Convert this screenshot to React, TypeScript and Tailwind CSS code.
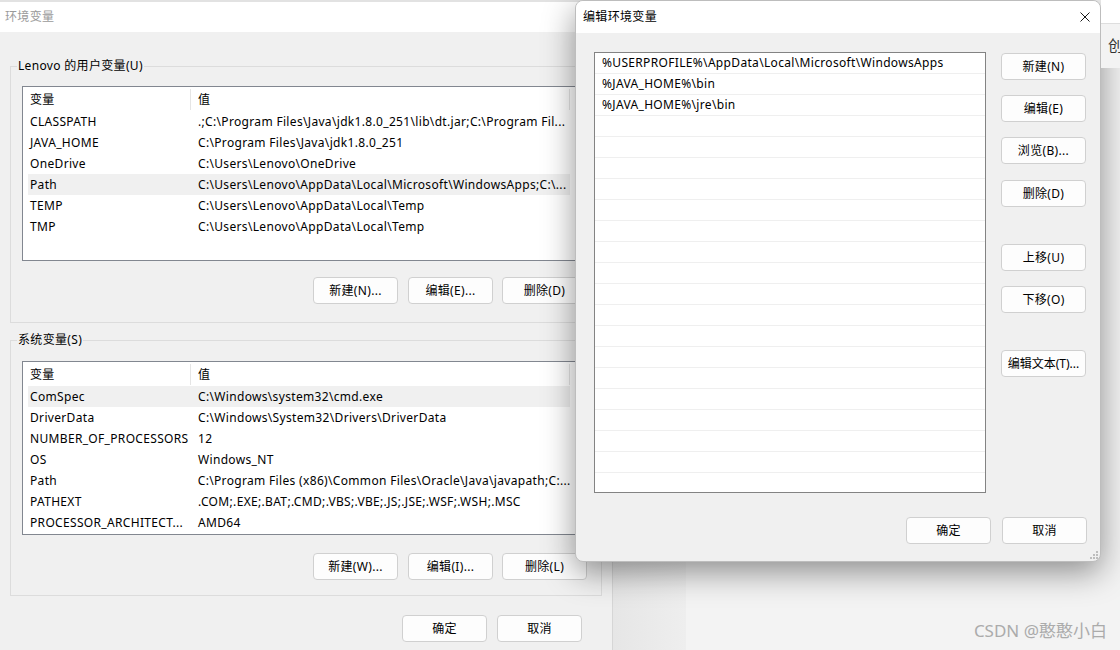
import React from 'react';

const userVars: [string, string][] = [
  ['CLASSPATH', ' .;C:\\Program Files\\Java\\jdk1.8.0_251\\lib\\dt.jar;C:\\Program Fil...'],
  ['JAVA_HOME', 'C:\\Program Files\\Java\\jdk1.8.0_251'],
  ['OneDrive', 'C:\\Users\\Lenovo\\OneDrive'],
  ['Path', 'C:\\Users\\Lenovo\\AppData\\Local\\Microsoft\\WindowsApps;C:\\...'],
  ['TEMP', 'C:\\Users\\Lenovo\\AppData\\Local\\Temp'],
  ['TMP', 'C:\\Users\\Lenovo\\AppData\\Local\\Temp'],
];

const systemVars: [string, string][] = [
  ['ComSpec', 'C:\\Windows\\system32\\cmd.exe'],
  ['DriverData', 'C:\\Windows\\System32\\Drivers\\DriverData'],
  ['NUMBER_OF_PROCESSORS', '12'],
  ['OS', 'Windows_NT'],
  ['Path', 'C:\\Program Files (x86)\\Common Files\\Oracle\\Java\\javapath;C:...'],
  ['PATHEXT', '.COM;.EXE;.BAT;.CMD;.VBS;.VBE;.JS;.JSE;.WSF;.WSH;.MSC'],
  ['PROCESSOR_ARCHITECT...', 'AMD64'],
];

const pathEntries = [
  '%USERPROFILE%\\AppData\\Local\\Microsoft\\WindowsApps',
  '%JAVA_HOME%\\bin',
  '%JAVA_HOME%\\jre\\bin',
];

const WinButton = ({ label, className = '' }: { label: string; className?: string }) => (
  <button
    type="button"
    className={`w-[85px] h-[27px] shrink-0 rounded-[4px] border border-[#d0d0d0] bg-[#fdfdfd] text-[12px] leading-[25px] text-black ${className}`}
  >
    {label}
  </button>
);

const VarList = ({ rows, selected, height }: { rows: [string, string][]; selected: number; height: string }) => (
  <div className={`w-[568px] ${height} border border-[#828790] bg-white overflow-hidden`}>
    <div className="flex h-[24px] items-center ml-[5px]">
      <div className="w-[163px] h-[21px] leading-[21px] pl-[2px] border-r border-[#e5e5e5]">变量</div>
      <div className="w-[379px] h-[21px] leading-[21px] pl-[7px] border-r border-[#e5e5e5]">值</div>
    </div>
    {rows.map(([name, value], i) => (
      <div
        key={name}
        className={`flex h-[21px] leading-[21px] ml-[5px] w-[542px] whitespace-nowrap ${i === selected ? 'bg-[#f0f0f0]' : ''}`}
      >
        <div className="w-[163px] pl-[2px] overflow-hidden">{name}</div>
        <div className="pl-[7px] overflow-hidden">{value}</div>
      </div>
    ))}
  </div>
);

const GroupLabel = ({ text }: { text: string }) => (
  <span className="absolute left-[6px] top-[-10px] px-[1px] leading-[18px] bg-[#f0f0f0]">{text}</span>
);

export default function App() {
  return (
    <div className="relative w-[1120px] h-[650px] overflow-hidden bg-[#f3f3f3] text-[12px] tracking-[0.33px] text-black font-['Noto_Sans','Noto_Sans_CJK_SC',sans-serif]">
      {/* panel behind, right of the old window */}
      <div className="absolute left-[613px] top-0 w-[73px] h-[650px] bg-gradient-to-r from-[#e6e6e6] to-[#eeeeee]" />

      {/* something peeking out at the top right */}
      <div className="absolute left-[1101px] top-0 w-[19px] h-[70px] z-10">
        <div className="h-[24px] bg-white border-b border-[#dedede]" />
        <div className="flex items-center h-[44px] bg-[#f3f3f3] pb-[2px]">
          <span className="w-[5px] h-[8px] rounded-r-full bg-[#a58be0]" />
          <span className="ml-[7px] text-[15px] text-[#333]">创</span>
        </div>
      </div>

      {/* 环境变量 window */}
      <div className="absolute left-0 top-0 w-[613px] h-[650px] bg-[#f0f0f0] border-r border-[#d6d6d6]">
        <div className="h-[2px] bg-[#e2e2e2]" />
        <div className="h-[30px] bg-white pl-[5px] flex items-center text-[#9a9a9a]">环境变量</div>

        <div className="relative ml-[10px] mt-[34px] w-[592px] h-[257px] border border-[#dcdcdc] pl-[11px] pt-[19px]">
          <GroupLabel text="Lenovo 的用户变量(U)" />
          <VarList rows={userVars} selected={3} height="h-[175px]" />
          <div className="flex justify-end gap-[10px] pr-[14px] mt-[16px]">
            <WinButton label="新建(N)..." />
            <WinButton label="编辑(E)..." />
            <WinButton label="删除(D)" className="-ml-[1px]" />
          </div>
        </div>

        <div className="relative ml-[10px] mt-[17px] w-[592px] h-[256px] border border-[#dcdcdc] pl-[11px] pt-[20px]">
          <GroupLabel text="系统变量(S)" />
          <VarList rows={systemVars} selected={0} height="h-[174px]" />
          <div className="flex justify-end gap-[10px] pr-[14px] mt-[18px]">
            <WinButton label="新建(W)..." />
            <WinButton label="编辑(I)..." />
            <WinButton label="删除(L)" className="-ml-[1px]" />
          </div>
        </div>

        <div className="flex justify-end gap-[10px] pr-[30px] mt-[19px]">
          <WinButton label="确定" />
          <WinButton label="取消" />
        </div>
      </div>

      {/* 编辑环境变量 dialog */}
      <div className="absolute left-[575px] top-0 w-[526px] h-[562px] rounded-[8px] border border-[#bdbdbd] bg-[#f0f0f0] overflow-hidden shadow-[0_10px_32px_rgba(0,0,0,0.42)]">
        <div className="h-[32px] bg-white flex items-center justify-between pl-[7px] pr-[10px]">
          <span>编辑环境变量</span>
          <svg width="10" height="10" viewBox="0 0 10 10">
            <path d="M0.5 0.5 L9.5 9.5 M9.5 0.5 L0.5 9.5" stroke="#1a1a1a" strokeWidth="1" />
          </svg>
        </div>

        <div className="flex pl-[18px] pt-[19px]">
          <div className="w-[392px] h-[441px] border border-[#838383] bg-white overflow-hidden">
            {Array.from({ length: 21 }).map((_, i) => (
              <div key={i} className="h-[21px] border-b border-[#efefef] pl-[7px] leading-[20px] whitespace-nowrap">
                {pathEntries[i] ?? ''}
              </div>
            ))}
          </div>
          <div className="flex flex-col ml-[15px] mt-[1px]">
            <WinButton label="新建(N)" />
            <WinButton label="编辑(E)" className="mt-[15px]" />
            <WinButton label="浏览(B)..." className="mt-[15px]" />
            <WinButton label="删除(D)" className="mt-[16px]" />
            <WinButton label="上移(U)" className="mt-[37px]" />
            <WinButton label="下移(O)" className="mt-[15px]" />
            <WinButton label="编辑文本(T)..." className="mt-[37px] tracking-normal" />
          </div>
        </div>

        <div className="flex justify-end gap-[11px] pr-[13px] mt-[24px]">
          <WinButton label="确定" className="border-[#0067c0]" />
          <WinButton label="取消" />
        </div>

        <svg className="absolute right-[2px] bottom-[2px]" width="9" height="9" viewBox="0 0 9 9">
          <rect x="7" y="1" width="2" height="2" fill="#bdbdbd" />
          <rect x="4" y="4" width="2" height="2" fill="#bdbdbd" />
          <rect x="7" y="4" width="2" height="2" fill="#bdbdbd" />
          <rect x="1" y="7" width="2" height="2" fill="#bdbdbd" />
          <rect x="4" y="7" width="2" height="2" fill="#bdbdbd" />
          <rect x="7" y="7" width="2" height="2" fill="#bdbdbd" />
        </svg>
      </div>

      <div className="absolute right-[13px] bottom-[7px] text-[17px] tracking-normal text-[#ababab]">CSDN @憨憨小白</div>
    </div>
  );
}
